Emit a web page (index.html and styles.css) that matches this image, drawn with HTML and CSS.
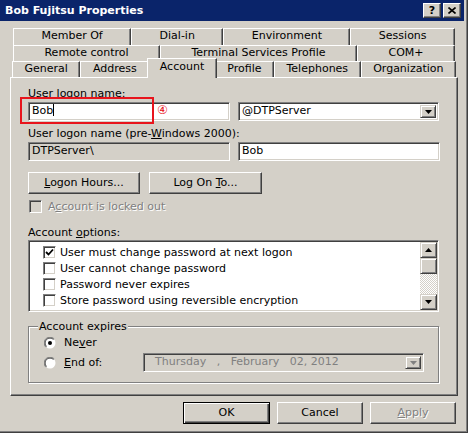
FILE: index.html
```html
<!DOCTYPE html>
<html>
<head>
	<meta charset="utf-8"/>
	<title>Bob Fujitsu Properties</title>
	<link rel="stylesheet" href="styles.css">
</head>
<body>
<div class="window">
	<div class="titlebar">
		<span class="title">Bob Fujitsu Properties</span>
		<div class="cap-btns">
			<span class="cap-btn">?</span>
			<span class="cap-btn"><svg width="8" height="7" viewBox="0 0 8 7"><path d="M0.5 0.5 L7.5 6.5 M7.5 0.5 L0.5 6.5" stroke="#000" stroke-width="1.6"/></svg></span>
		</div>
	</div>

	<div class="tabstrip">
		<div class="tabrow row1">
			<div class="tab">Member Of</div>
			<div class="tab">Dial-in</div>
			<div class="tab">Environment</div>
			<div class="tab">Sessions</div>
		</div>
		<div class="tabrow">
			<div class="tab">Remote control</div>
			<div class="tab">Terminal Services Profile</div>
			<div class="tab">COM+</div>
		</div>
		<div class="tabrow front">
			<div class="tab">General</div>
			<div class="tab">Address</div>
			<div class="tab sel">Account</div>
			<div class="tab">Profile</div>
			<div class="tab">Telephones</div>
			<div class="tab">Organization</div>
		</div>
	</div>

	<div class="panel">
		<div class="label">User logon name:</div>
		<div class="field-row">
			<div class="field">Bob<span class="caret"></span></div>
			<div class="field combo">@DTPServer
				<span class="drop"><svg width="7" height="4" viewBox="0 0 7 4"><path d="M0 0 H7 L3.5 4 Z" fill="#000"/></svg></span>
			</div>
			<!-- annotation -->
			<span class="mark"></span>
			<span class="mark-num">④</span>
		</div>

		<div class="label gap">User logon name (pre-<u>W</u>indows 2000):</div>
		<div class="field-row">
			<div class="field ro">DTPServer\</div>
			<div class="field">Bob</div>
		</div>

		<div class="btn-row">
			<div class="btn hours"><u>L</u>ogon Hours...</div>
			<div class="btn logon">Log On <u>T</u>o...</div>
		</div>

		<div class="locked">
			<span class="check off"></span>
			<span class="dis">A<u>c</u>count is locked out</span>
		</div>

		<div class="label opt">Account <u>o</u>ptions:</div>
		<div class="listbox">
			<div class="items">
				<div class="item">
					<span class="check"><svg width="9" height="9" viewBox="0 0 9 9"><path d="M1 4 L3.5 6.5 L8 1.5" fill="none" stroke="#000" stroke-width="1.8"/></svg></span>
					User must change password at next logon
				</div>
				<div class="item"><span class="check"></span>User cannot change password</div>
				<div class="item"><span class="check"></span>Password never expires</div>
				<div class="item"><span class="check"></span>Store password using reversible encryption</div>
			</div>
			<div class="scrollbar">
				<span class="sb-btn"><svg width="7" height="4" viewBox="0 0 7 4"><path d="M0 4 H7 L3.5 0 Z" fill="#000"/></svg></span>
				<span class="sb-btn"></span>
				<span class="track"></span>
				<span class="sb-btn"><svg width="7" height="4" viewBox="0 0 7 4"><path d="M0 0 H7 L3.5 4 Z" fill="#000"/></svg></span>
			</div>
		</div>

		<fieldset class="group">
			<legend>Account expires</legend>
			<div class="group-body">
				<div class="radio-row">
					<svg class="radio" width="12" height="12" viewBox="0 0 12 12">
						<circle cx="6" cy="6" r="5.5" fill="#fff"/>
						<path d="M1.8 10.2 A5.5 5.5 0 0 1 10.2 1.8" fill="none" stroke="#808080"/>
						<path d="M2.5 9.5 A4.5 4.5 0 0 1 9.5 2.5" fill="none" stroke="#404040"/>
						<circle cx="6" cy="6" r="2" fill="#000"/>
					</svg>
					<span>Ne<u>v</u>er</span>
				</div>
				<div class="radio-row end">
					<svg class="radio" width="12" height="12" viewBox="0 0 12 12">
						<circle cx="6" cy="6" r="5.5" fill="#fff"/>
						<path d="M1.8 10.2 A5.5 5.5 0 0 1 10.2 1.8" fill="none" stroke="#808080"/>
						<path d="M2.5 9.5 A4.5 4.5 0 0 1 9.5 2.5" fill="none" stroke="#404040"/>
					</svg>
					<span class="end-label"><u>E</u>nd of:</span>
					<div class="field date">Thursday&nbsp;&nbsp;&nbsp;,&nbsp;&nbsp;&nbsp;February&nbsp;&nbsp;&nbsp;02, 2012
						<span class="drop"><svg width="7" height="4" viewBox="0 0 7 4"><path d="M0 0 H7 L3.5 4 Z" fill="#808080"/></svg></span>
					</div>
				</div>
			</div>
		</fieldset>
	</div>

	<div class="dlg-btns">
		<div class="btn default">OK</div>
		<div class="btn">Cancel</div>
		<div class="btn dis"><u>A</u>pply</div>
	</div>
</div>
</body>
</html>
```
FILE: styles.css
```css
*{margin:0;padding:0;box-sizing:border-box;}
body{
	width:468px;
	height:433px;
	overflow:hidden;
	background:#d4d0c8;
	font:11px "DejaVu Sans", sans-serif;
	color:#000;
}
u{text-decoration:underline;text-underline-offset:1px;}

.window{
	width:468px;
	height:433px;
	background:#d4d0c8;
	border-right:1px solid #404040;
	border-bottom:1px solid #404040;
	box-shadow:inset -1px -1px #808080;
}

/* title bar */
.titlebar{
	width:464px;
	height:21px;
	background:#0a246a;
	color:#fff;
	font-weight:bold;
	display:flex;
	align-items:center;
	justify-content:space-between;
	padding:0 3px 0 5px;
}
.cap-btns{display:flex;gap:2px;}
.cap-btn{
	width:18px;
	height:15px;
	background:#d4d0c8;
	color:#000;
	font-size:11px;
	border:1px solid;
	border-color:#fff #404040 #404040 #fff;
	box-shadow:inset -1px -1px #808080;
	display:flex;
	align-items:center;
	justify-content:center;
}

/* tabs */
.tabstrip{
	margin:7px 0 0 10px;
	width:448px;
}
.tabrow{
	display:flex;
	padding:0 3px;
}
.tabrow.front{padding:0 2px;}
.tab{
	flex:1 1 auto;
	height:16px;
	line-height:13px;
	text-align:center;
	white-space:nowrap;
	background:#d4d0c8;
	border:1px solid;
	border-bottom:0;
	border-color:#fff #404040 transparent #fff;
	box-shadow:inset -1px 0 #808080;
}
.row1 .tab{height:17px;}
.tab.sel{
	height:20px;
	margin:-3px -2px -1px;
	line-height:15px;
	position:relative;
	z-index:1;
}

/* panel */
.panel{
	width:448px;
	height:319px;
	margin-left:10px;
	border:1px solid;
	border-color:#fff #404040 #404040 #fff;
	box-shadow:inset -1px -1px #808080;
	padding:9px 0 0 17px;
}
.label{line-height:13px;height:13px;}
.label.gap{margin-top:6px;}
.label.opt{margin-top:13px;}

.field-row{
	display:flex;
	gap:8px;
	margin-top:2px;
	position:relative;
}
.field{
	position:relative;
	width:202px;
	height:19px;
	line-height:16px;
	padding:0 3px;
	background:#fff;
	white-space:nowrap;
	border:1px solid;
	border-color:#808080 #fff #fff #808080;
	box-shadow:inset 1px 1px #404040, inset -1px -1px #d4d0c8;
}
.field.combo{width:201px;}
.field.ro{background:#d4d0c8;}
.caret{
	display:inline-block;
	width:1px;
	height:12px;
	background:#000;
	vertical-align:-2px;
}
.drop{
	position:absolute;
	right:2px;
	top:2px;
	width:16px;
	height:13px;
	background:#d4d0c8;
	border:1px solid;
	border-color:#d4d0c8 #404040 #404040 #d4d0c8;
	box-shadow:inset 1px 1px #fff, inset -1px -1px #808080;
	display:flex;
	align-items:center;
	justify-content:center;
}

/* red annotation */
.mark{
	position:absolute;
	left:-8px;
	top:-5px;
	width:134px;
	height:27px;
	border:2px solid #e8141c;
}
.mark-num{
	position:absolute;
	left:129px;
	top:2px;
	color:#e8141c;
	font-size:12px;
	line-height:13px;
}

/* buttons */
.btn-row{
	display:flex;
	gap:9px;
	margin-top:11px;
}
.btn{
	width:86px;
	height:22px;
	line-height:19px;
	text-align:center;
	background:#d4d0c8;
	border:1px solid;
	border-color:#fff #404040 #404040 #fff;
	box-shadow:inset -1px -1px #808080;
}
.btn.hours{width:112px;}
.btn.logon{width:113px;}
.btn.default{
	width:87px;
	border-color:#000;
	box-shadow:inset 1px 1px #fff, inset -1px -1px #404040, inset -2px -2px #808080;
}
.dis{
	color:#808080;
	text-shadow:1px 1px #fff;
}

/* checkboxes */
.check{
	width:13px;
	height:13px;
	flex:none;
	background:#fff;
	border:1px solid;
	border-color:#808080 #fff #fff #808080;
	box-shadow:inset 1px 1px #404040, inset -1px -1px #d4d0c8;
	display:flex;
	align-items:center;
	justify-content:center;
}
.check.off{background:#d4d0c8;}
.locked{
	display:flex;
	align-items:center;
	gap:6px;
	height:13px;
	margin:6px 0 0 1px;
}

/* list */
.listbox{
	display:flex;
	width:411px;
	height:72px;
	margin-top:1px;
	background:#fff;
	border:1px solid;
	border-color:#808080 #fff #fff #808080;
	box-shadow:inset 1px 1px #404040, inset -1px -1px #d4d0c8;
	padding:1px;
}
.items{
	flex:1;
	padding:2px 0 0 13px;
}
.item{
	display:flex;
	align-items:center;
	gap:4px;
	height:16px;
	white-space:nowrap;
}
.scrollbar{
	width:17px;
	display:flex;
	flex-direction:column;
}
.sb-btn{
	height:16px;
	background:#d4d0c8;
	border:1px solid;
	border-color:#d4d0c8 #404040 #404040 #d4d0c8;
	box-shadow:inset 1px 1px #fff, inset -1px -1px #808080;
	display:flex;
	align-items:center;
	justify-content:center;
}
.track{
	flex:1;
	background:repeating-conic-gradient(#fff 0 25%, #d4d0c8 0 50%) 0 0/2px 2px;
}

/* account expires */
.group{
	width:411px;
	margin-top:8px;
	border:1px solid #808080;
	box-shadow:1px 1px #fff, inset 1px 1px #fff;
	padding:0;
}
.group legend{
	margin-left:9px;
	padding:0 1px;
	line-height:13px;
	background:#d4d0c8;
}
.group-body{padding:3px 0 10px 15px;}
.radio-row{
	display:flex;
	align-items:center;
	gap:8px;
	height:13px;
}
.radio-row.end{
	height:19px;
	margin-top:4px;
}
.radio{flex:none;}
.end-label{width:71px;}
.field.date{
	width:281px;
	background:#d4d0c8;
	color:#808080;
	padding-left:11px;
}

/* dialog buttons */
.dlg-btns{
	display:flex;
	justify-content:flex-end;
	gap:7px;
	margin-top:6px;
	padding-right:11px;
}
```
